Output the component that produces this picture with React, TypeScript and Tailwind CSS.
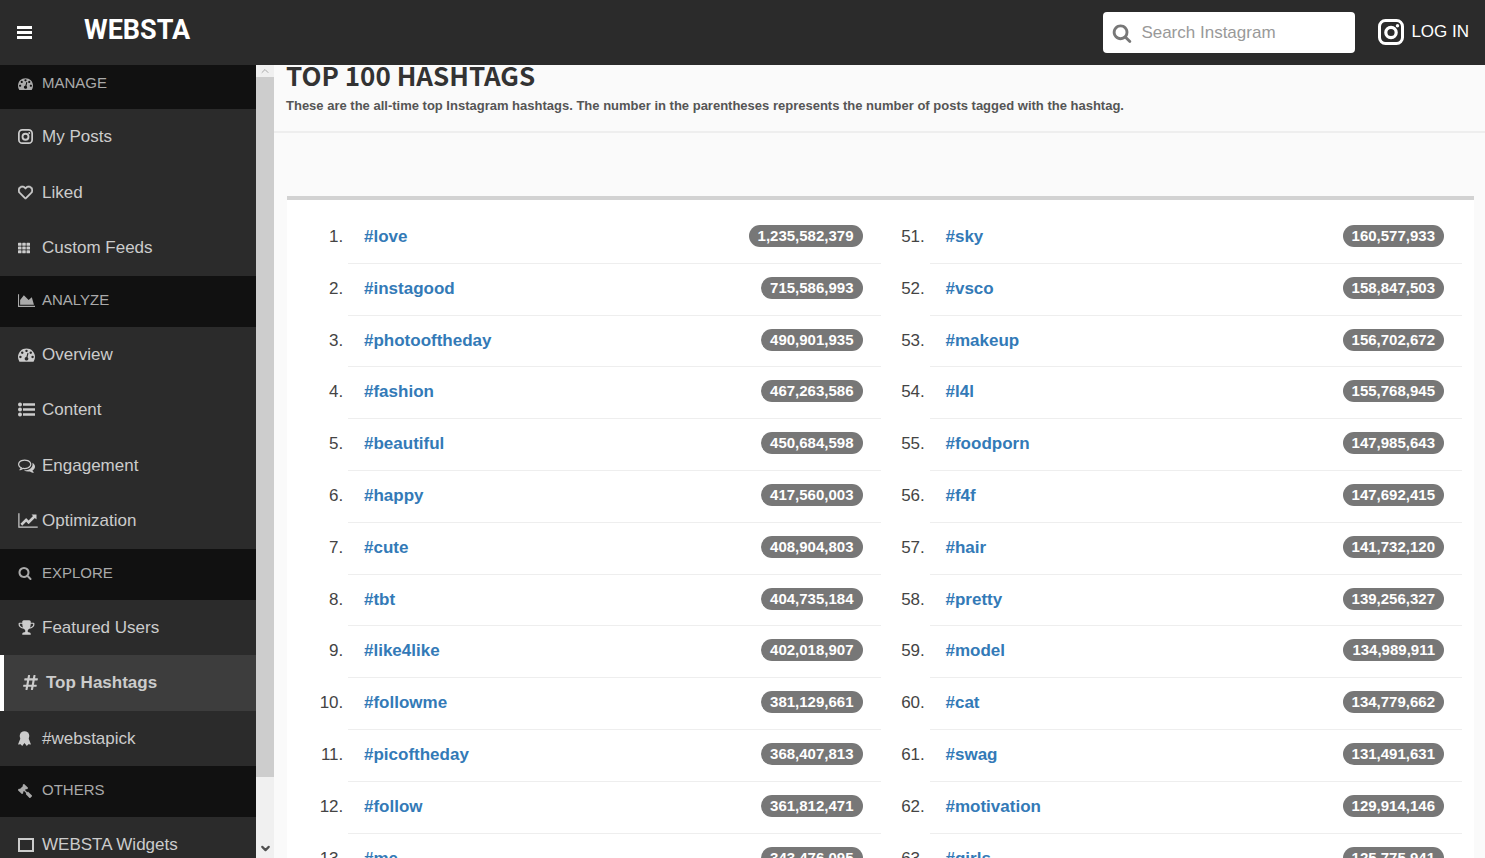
import type { ReactNode } from 'react'
import { FaHashtag, FaGavel, FaRegHeart, FaTh } from 'react-icons/fa'
import { ChevronDown, ChevronUp } from 'lucide-react'
import clsx from 'clsx'

interface GlyphProps {
  d: string
  wide?: boolean
  className?: string
}

function Glyph({ d, wide, className }: GlyphProps) {
  return (
    <svg viewBox={wide ? '0 0 2048 1792' : '0 0 1792 1792'} className={className} fill="currentColor" aria-hidden="true">
      <path d={d} />
    </svg>
  )
}

const paths = {
  gauge:
    'M384 1152q0-53-37.5-90.5t-90.5-37.5-90.5 37.5-37.5 90.5 37.5 90.5 90.5 37.5 90.5-37.5 37.5-90.5zm192-448q0-53-37.5-90.5t-90.5-37.5-90.5 37.5-37.5 90.5 37.5 90.5 90.5 37.5 90.5-37.5 37.5-90.5zm428 481l101-382q6-26-7.5-48.5t-38.5-29.5-48 6.5-30 39.5l-101 382q-60 5-107 43.5t-63 98.5q-20 77 20 146t117 89 146-20 89-117q16-60-6-117t-72-91zm660-33q0-53-37.5-90.5t-90.5-37.5-90.5 37.5-37.5 90.5 37.5 90.5 90.5 37.5 90.5-37.5 37.5-90.5zm-640-640q0-53-37.5-90.5t-90.5-37.5-90.5 37.5-37.5 90.5 37.5 90.5 90.5 37.5 90.5-37.5 37.5-90.5zm448 192q0-53-37.5-90.5t-90.5-37.5-90.5 37.5-37.5 90.5 37.5 90.5 90.5 37.5 90.5-37.5 37.5-90.5zm320 448q0 261-141 483-19 29-54 29h-1402q-35 0-54-29-141-221-141-483 0-182 71-348t191-286 286-191 348-71 348 71 286 191 191 286 71 348z',
  area: 'M2048 1536v128h-2048v-1536h128v1408h1920zm-384-1024l256 896h-1664v-576l448-576 576 576z',
  line: 'M2048 1536v128h-2048v-1536h128v1408h1920zm-128-1248v435q0 21-19.5 29.5t-35.5-7.5l-121-121-633 633q-10 10-23 10t-23-10l-233-233-416 416-192-192 585-585q10-10 23-10t23 10l233 233 464-464-121-121q-16-16-7.5-35.5t29.5-19.5h435q14 0 23 9t9 23z',
  comments:
    'M704 384q-153 0-286 52t-211.5 141-78.5 191q0 82 53 158t149 132l97 56-35 84q34-20 62-39l44-31 53 10q78 14 153 14 153 0 286-52t211.5-141 78.5-191-78.5-191-211.5-141-286-52zm0-128q191 0 353.5 68.5t256.5 186.5 94 257-94 257-256.5 186.5-353.5 68.5q-86 0-176-16-124 88-278 128-36 9-86 16h-3q-11 0-20.5-8t-11.5-21q-1-3-1-6.5t.5-6.5 2-6l2.5-5 3.5-5.5 4-5 4.5-5 4-4.5q5-6 23-25t26-29.5 22.5-29 25-38.5 20.5-44q-124-72-195-177t-71-224q0-139 94-257t256.5-186.5 353.5-68.5zm822 1169q10 24 20.5 44t25 38.5 22.5 29 26 29.5 23 25q1 1 4 4.5t4.5 5 4 5 3.5 5.5l2.5 5 2 6 .5 6.5-1 6.5q-3 14-13 22t-22 7q-50-7-86-16-154-40-278-128-90 16-176 16-271 0-472-132 58 4 88 4 161 0 309-45t264-129q125-92 192-212t67-254q0-77-23-152 129 71 204 178t75 230q0 120-71 224.5t-195 176.5z',
  search:
    'M1216 832q0-185-131.5-316.5t-316.5-131.5-316.5 131.5-131.5 316.5 131.5 316.5 316.5 131.5 316.5-131.5 131.5-316.5zm512 832q0 52-38 90t-90 38q-54 0-90-38l-343-342q-179 124-399 124-143 0-273.5-55.5t-225-150-150-225-55.5-273.5 55.5-273.5 150-225 225-150 273.5-55.5 273.5 55.5 225 150 150 225 55.5 273.5q0 220-124 399l343 343q37 37 37 90z',
  trophy:
    'M522 883q-74-162-74-371h-256v96q0 78 94.5 162t235.5 113zm1078-275v-96h-256q0 209-74 371 141-29 235.5-113t94.5-162zm128-128v128q0 71-41.5 143t-112 130-173 97.5-215.5 44.5q-42 54-95 95-38 34-52.5 72.5t-14.5 89.5q0 54 30.5 91t97.5 37q75 0 133.5 45.5t58.5 114.5v64q0 14-9 23t-23 9h-832q-14 0-23-9t-9-23v-64q0-69 58.5-114.5t133.5-45.5q67 0 97.5-37t30.5-91q0-51-14.5-89.5t-52.5-72.5q-53-41-95-95-113-5-215.5-44.5t-173-97.5-112-130-41.5-143v-128q0-40 28-68t68-28h288v-96q0-66 47-113t113-47h576q66 0 113 47t47 113v96h288q40 0 68 28t28 68z',
}

function Camera({ className }: { className: string }) {
  return (
    <svg viewBox="0 0 26 26" className={className} fill="none" stroke="currentColor" aria-hidden="true">
      <rect x="1.5" y="1.5" width="23" height="23" rx="6" strokeWidth="3" />
      <circle cx="13" cy="13.5" r="5.2" strokeWidth="3.2" />
      <circle cx="19.5" cy="6.8" r="1.7" fill="currentColor" stroke="none" />
    </svg>
  )
}

function MenuBars() {
  return (
    <svg viewBox="0 0 15 13" className="h-[13px] w-[15px]" fill="currentColor" aria-hidden="true">
      <path d="M0 0h15v3H0zM0 5h15v3H0zM0 10h15v3H0z" />
    </svg>
  )
}

function BulletList() {
  return (
    <svg viewBox="0 0 17 15" className="h-[15px] w-[17px]" fill="currentColor" aria-hidden="true">
      <circle cx="2" cy="2.5" r="2" />
      <circle cx="2" cy="7.5" r="2" />
      <circle cx="2" cy="12.5" r="2" />
      <path d="M5 1.3h12v2.4H5zM5 6.3h12v2.4H5zM5 11.3h12v2.4H5z" />
    </svg>
  )
}

function Rosette() {
  return (
    <svg viewBox="0 0 13 15" className="h-[15px] w-[13px]" fill="currentColor" aria-hidden="true">
      <circle cx="6.5" cy="5" r="4.8" />
      <path d="M2.6 7 0 13.6l2.6-.4L4.2 15l2.3-3 2.3 3 1.6-1.8 2.6.4L10.4 7z" />
    </svg>
  )
}

function Frame() {
  return (
    <svg viewBox="0 0 16 14" className="h-[14px] w-4" fill="none" stroke="currentColor" aria-hidden="true">
      <rect x="1" y="1" width="14" height="12" strokeWidth="2" />
    </svg>
  )
}

interface NavItem {
  label: string
  icon: ReactNode
  active?: boolean
}

interface NavSection {
  title: string
  icon: ReactNode
  items: NavItem[]
}

const sections: NavSection[] = [
  {
    title: 'MANAGE',
    icon: <Glyph d={paths.gauge} className="size-[15px]" />,
    items: [
      { label: 'My Posts', icon: <Camera className="size-[15px]" /> },
      { label: 'Liked', icon: <FaRegHeart size={15} strokeWidth={20} stroke="currentColor" /> },
      { label: 'Custom Feeds', icon: <FaTh size={12} /> },
    ],
  },
  {
    title: 'ANALYZE',
    icon: <Glyph d={paths.area} wide className="h-[15px] w-[17px]" />,
    items: [
      { label: 'Overview', icon: <Glyph d={paths.gauge} className="size-[17px]" /> },
      { label: 'Content', icon: <BulletList /> },
      { label: 'Engagement', icon: <Glyph d={paths.comments} className="size-[17px]" /> },
      { label: 'Optimization', icon: <Glyph d={paths.line} wide className="h-[17px] w-5" /> },
    ],
  },
  {
    title: 'EXPLORE',
    icon: <Glyph d={paths.search} className="size-[14px]" />,
    items: [
      { label: 'Featured Users', icon: <Glyph d={paths.trophy} className="size-[17px]" /> },
      { label: 'Top Hashtags', icon: <FaHashtag size={17} />, active: true },
      { label: '#webstapick', icon: <Rosette /> },
    ],
  },
  {
    title: 'OTHERS',
    icon: <FaGavel size={14} className="-scale-x-100" />,
    items: [{ label: 'WEBSTA Widgets', icon: <Frame /> }],
  },
]

const leftTags: [string, string][] = [
  ['#love', '1,235,582,379'],
  ['#instagood', '715,586,993'],
  ['#photooftheday', '490,901,935'],
  ['#fashion', '467,263,586'],
  ['#beautiful', '450,684,598'],
  ['#happy', '417,560,003'],
  ['#cute', '408,904,803'],
  ['#tbt', '404,735,184'],
  ['#like4like', '402,018,907'],
  ['#followme', '381,129,661'],
  ['#picoftheday', '368,407,813'],
  ['#follow', '361,812,471'],
  ['#me', '343,476,095'],
]

const rightTags: [string, string][] = [
  ['#sky', '160,577,933'],
  ['#vsco', '158,847,503'],
  ['#makeup', '156,702,672'],
  ['#l4l', '155,768,945'],
  ['#foodporn', '147,985,643'],
  ['#f4f', '147,692,415'],
  ['#hair', '141,732,120'],
  ['#pretty', '139,256,327'],
  ['#model', '134,989,911'],
  ['#cat', '134,779,662'],
  ['#swag', '131,491,631'],
  ['#motivation', '129,914,146'],
  ['#girls', '125,775,941'],
]

function Header() {
  return (
    <header className="flex h-[65px] shrink-0 items-center bg-[#2b2b2b] text-white">
      <button type="button" aria-label="Toggle menu" className="ml-[17px]">
        <MenuBars />
      </button>
      <a href="#" className="ml-[52px] pb-1 font-[Roboto,sans-serif] text-[27px] leading-none font-bold">
        WEBSTA
      </a>
      <label className="ml-auto flex h-[41px] w-[252px] items-center rounded bg-white pl-[9px] text-[#777]">
        <Glyph d={paths.search} className="size-5 shrink-0" />
        <input
          type="search"
          aria-label="Search Instagram"
          placeholder="Search Instagram"
          className="ml-[9px] w-full min-w-0 bg-transparent text-[17px] text-[#333] outline-none placeholder:text-[#999]"
        />
      </label>
      <a href="#" className="mr-4 ml-[23px] flex items-center gap-[7px] pb-0.5 text-[17px]">
        <Camera className="size-[26px]" />
        LOG IN
      </a>
    </header>
  )
}

function Sidebar() {
  return (
    <nav className="w-64 shrink-0 overflow-hidden bg-[#2b2b2b] text-[17px] leading-normal text-[#ccc]">
      {sections.map((section, i) => (
        <section key={section.title}>
          <h2
            className={clsx(
              'flex items-center bg-[#111] pl-[18px] text-[15px] text-[#aaa]',
              i === 0 ? 'h-11 pb-2' : 'h-[51px] pb-0.5'
            )}
          >
            <span className="w-6">{section.icon}</span>
            {section.title}
          </h2>
          <ul>
            {section.items.map((item) => (
              <li key={item.label}>
                <a
                  href="#"
                  className={clsx(
                    'flex items-center py-[15px] pl-[18px]',
                    item.active && 'border-l-4 border-white bg-[#3d3d3d] font-bold'
                  )}
                >
                  <span className="w-6 shrink-0">{item.icon}</span>
                  {item.label}
                </a>
              </li>
            ))}
          </ul>
        </section>
      ))}
    </nav>
  )
}

function ScrollTrack() {
  return (
    <div className="flex w-[18px] shrink-0 flex-col items-center bg-[#f0f0f0]" aria-hidden="true">
      <ChevronUp size={12} className="text-[#aaa]" />
      <div className="w-full flex-[9] bg-[#cdcdcd]" />
      <div className="flex flex-1 items-end pb-[3px]">
        <ChevronDown size={13} strokeWidth={4} className="text-[#505050]" />
      </div>
    </div>
  )
}

function TagList({ tags, start }: { tags: [string, string][]; start: number }) {
  return (
    <ol start={start} className="min-w-0 flex-1 list-decimal pl-[49px] text-[17px] leading-[1.4] text-[#444]">
      {tags.map(([tag, count]) => (
        <li key={tag} className="border-b border-[#eee]">
          <div className="flex items-start justify-between pt-[13px] pr-[18px] pb-[14px] pl-4">
            <a href="#" className="font-bold text-[#337ab7]">
              {tag}
            </a>
            <span className="h-[22px] rounded-full bg-[#777] px-[9px] text-[15px] leading-[22px] font-bold text-white">
              {count}
            </span>
          </div>
        </li>
      ))}
    </ol>
  )
}

export default function App() {
  return (
    <div className="flex h-screen flex-col overflow-hidden font-['Liberation_Sans',Arial,sans-serif]">
      <Header />
      <div className="flex min-h-0 flex-1">
        <Sidebar />
        <ScrollTrack />
        <main className="min-w-0 flex-1 overflow-hidden bg-[#fafafa]">
          <div className="border-b-2 border-[#eee] px-3 pb-4">
            <h1 className="font-['Noto_Sans_CJK_JP',sans-serif] text-[26px] leading-5 font-bold text-[#333]">
              TOP 100 HASHTAGS
            </h1>
            <p className="mt-3 text-[13px] leading-[18px] font-bold text-[#555]">
              These are the all-time top Instagram hashtags. The number in the parentheses represents the number of
              posts tagged with the hashtag.
            </p>
          </div>
          <div className="mt-[63px] mr-[11px] ml-[13px] flex border-t-4 border-[#d2d2d2] bg-white px-3 pt-3">
            <TagList tags={leftTags} start={1} />
            <TagList tags={rightTags} start={51} />
          </div>
        </main>
      </div>
    </div>
  )
}
